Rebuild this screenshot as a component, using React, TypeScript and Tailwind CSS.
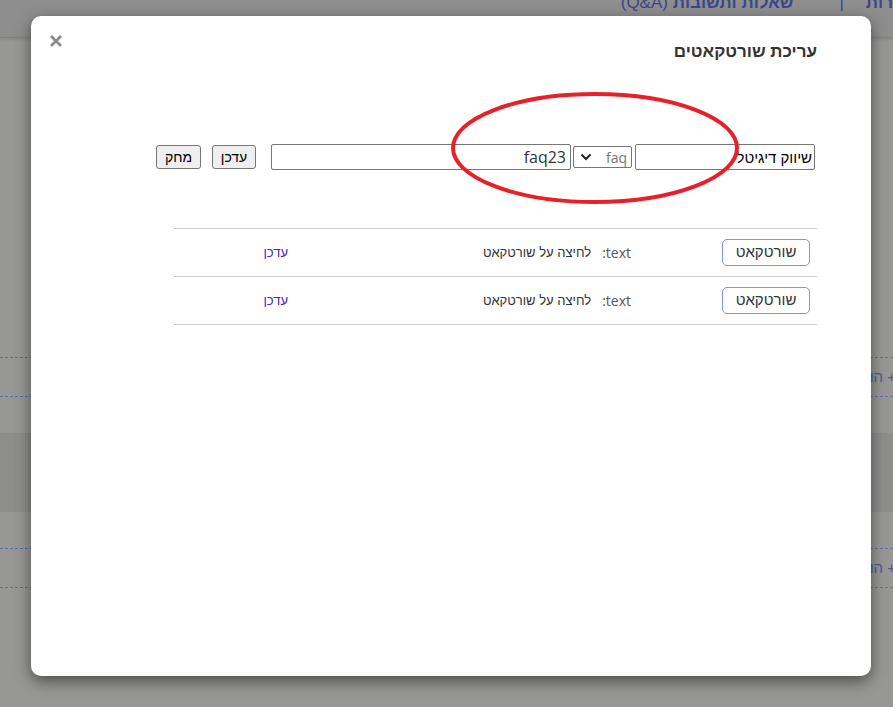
import React from "react";

const heb = { fontFamily: '"Liberation Sans", Arial, sans-serif' };
const mixed = { fontFamily: '"Open Sans", "Liberation Sans", Arial, sans-serif' };

function Row() {
  return (
    <div dir="rtl" className="flex items-center h-[48px] border-b border-[#cccccc]">
      <div className="w-[186px] pr-[7px] flex">
        <button
          className="h-[27px] w-[88px] rounded-[5px] border border-[#7b98dc] bg-white text-[15px] text-[#333]"
          style={heb}
        >
          שורטקאט
        </button>
      </div>
      <div className="w-[343px] flex items-center text-[14px]">
        <span className="text-[#555]" style={mixed}>text:</span>
        <span className="mr-[11px] text-[13px] text-[#333]" style={heb}>לחיצה על שורטקאט</span>
      </div>
      <a className="text-[13px] text-[#4a22c8] cursor-pointer" style={heb}>עדכן</a>
    </div>
  );
}

export default function App() {
  return (
    <div className="relative w-[893px] h-[707px] overflow-hidden bg-[#979795]">
      {/* background page (dimmed) */}
      <div dir="rtl" className="h-[38px] bg-[#8e8e8e] border-b border-[#808080] shadow-[0_1px_3px_rgba(0,0,0,0.15)] flex items-start overflow-hidden">
        <div className="flex items-center -mt-[10px] text-[17px] font-bold text-[#3a478a]" style={heb}>
          <span>רות</span>
          <span className="mr-[22px] ml-[46px] font-normal text-[#3a478a]">|</span>
          <span>שאלות ותשובות <span className="font-normal">(Q&amp;A)</span></span>
        </div>
      </div>
      <div className="pt-[319px]">
        <div dir="rtl" className="h-[40px] border-y border-dashed border-[#5a6ea8] flex items-center text-[15px] text-[#4a5b9c]" style={heb}>
          <span className="-mr-[3px]">+ הוספת שאלה</span>
        </div>
        <div className="mt-[36px] h-[79px] bg-[#8d8d8c]" />
        <div dir="rtl" className="mt-[36px] h-[40px] border-y border-dashed border-[#5a6ea8] flex items-center text-[15px] text-[#4a5b9c]" style={heb}>
          <span className="-mr-[3px]">+ הוספת שאלה</span>
        </div>
      </div>

      {/* modal */}
      <div className="absolute left-[31px] top-[16px] w-[840px] h-[660px] bg-white rounded-[10px] shadow-[0_5px_15px_rgba(0,0,0,0.5)]">
        <div className="relative h-full">
          <div className="absolute left-[19px] top-[19px]">
            <svg width="12" height="12" viewBox="0 0 12 12">
              <path d="M2 2 L10 10 M10 2 L2 10" stroke="#8c8c8c" strokeWidth="2.8" strokeLinecap="square" />
            </svg>
          </div>

          <div dir="rtl" className="pr-[54px] pt-[24px]">
            <h2 className="text-[17px] font-bold text-[#333] leading-[24px]" style={heb}>עריכת שורטקאטים</h2>
          </div>

          <div dir="rtl" className="mt-[80px] pr-[56px] flex items-center">
            <input
              readOnly
              value="שיווק דיגיטל"
              className="w-[180px] h-[26px] border border-[#767676] rounded-[2px] px-[2px] text-[15px] text-black outline-none"
              style={heb}
            />
            <div className="mr-[3px] w-[59px] h-[22px] border border-[#767676] rounded-[2px] flex items-center justify-between pr-[4px] pl-[6px] text-[14px] text-[#777]" style={mixed}>
              <span>faq</span>
              <svg width="12" height="8" viewBox="0 0 12 8">
                <path d="M1.5 1.5 L6 6 L10.5 1.5" stroke="#222" strokeWidth="2" fill="none" />
              </svg>
            </div>
            <input
              readOnly
              value="faq23"
              className="mr-[2px] w-[300px] h-[26px] border border-[#767676] rounded-[2px] px-[4px] text-[16px] text-[#333] outline-none"
              style={mixed}
            />
            <button className="mr-[15px] w-[44px] h-[24px] bg-[#efefef] border border-[#767676] rounded-[3px] text-[14px] text-black" style={heb}>
              עדכן
            </button>
            <button className="mr-[11px] w-[45px] h-[24px] bg-[#efefef] border border-[#767676] rounded-[3px] text-[14px] text-black" style={heb}>
              מחק
            </button>
          </div>

          <div className="mt-[58px] ml-[143px] mr-[54px] border-t border-[#cccccc]">
            <Row />
            <Row />
          </div>

          {/* red annotation ellipse */}
          <svg className="absolute left-[419px] top-[75px]" width="290" height="114" viewBox="0 0 290 114">
            <ellipse cx="145" cy="57" rx="142" ry="54" fill="none" stroke="#e8202a" strokeWidth="4" />
          </svg>
        </div>
      </div>
    </div>
  );
}
